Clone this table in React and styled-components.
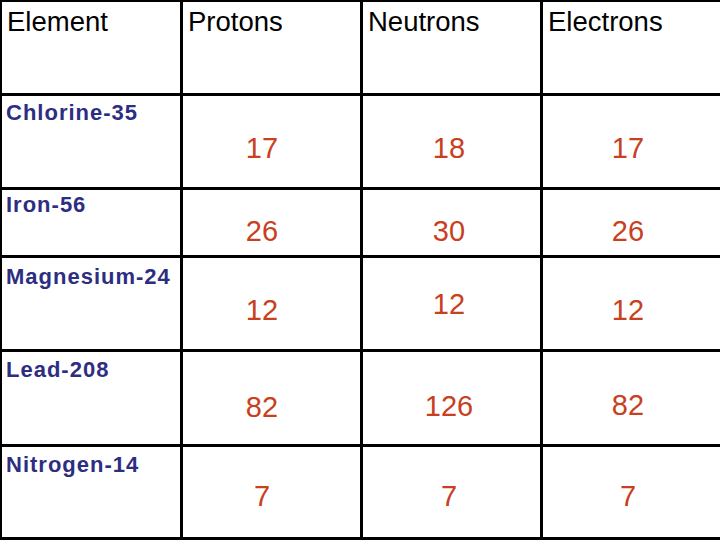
import { Fragment } from "react";
import styled, { createGlobalStyle } from "styled-components";

const GlobalStyle = createGlobalStyle`
  html, body {
    margin: 0;
    padding: 0;
    background: #fff;
    overflow: hidden;
  }
`;

// 표 데이터
const rows = [
  { name: "Chlorine-35", height: 91, nameTop: 4, values: [17, 18, 17], dy: [13, 13, 13] },
  { name: "Iron-56", height: 65, nameTop: 2, values: [26, 30, 26], dy: [18, 18, 18] },
  { name: "Magnesium-24", height: 91, nameTop: 6, values: [12, 12, 12], dy: [13, 2, 13] },
  { name: "Lead-208", height: 92, nameTop: 5, values: [82, 126, 82], dy: [18, 16, 14] },
  { name: "Nitrogen-14", height: 90, nameTop: 5, values: [7, 7, 7], dy: [8, 8, 8] },
];

const headers = ["Element", "Protons", "Neutrons", "Electrons"];
const shiftX = [19, 5, 7];

const Table = styled.div`
  width: 720px;
  height: 540px;
  box-sizing: border-box;
  display: grid;
  grid-template-columns: 178px 177px 177px 177px;
  grid-template-rows: 91px ${rows.map((r) => r.height + "px").join(" ")};
  gap: 3px;
  padding: 2px 0 3px 2px;
  background: #000;
`;

const HeadCell = styled.div`
  background: #fff;
  padding: 4px 0 0 5px;
  font-family: "Liberation Sans", Arial, sans-serif;
  font-size: 27.5px;
  color: #000;
`;

const NameCell = styled.div`
  background: #fff;
  padding: ${(p) => p.$top}px 0 0 4px;
  font-family: "Liberation Sans", Arial, sans-serif;
  font-size: 22px;
  font-weight: 700;
  letter-spacing: 1px;
  color: #2d2d82;
  white-space: nowrap;
`;

const NumCell = styled.div`
  background: #fff;
  display: flex;
  align-items: center;
  justify-content: center;
  padding-top: ${(p) => p.$dy}px;
  padding-right: ${(p) => p.$dx}px;
  font-family: "Liberation Sans", Arial, sans-serif;
  font-size: 29px;
  color: #c8401e;
`;

function App() {
  return (
    <>
      <GlobalStyle />
      <Table>
        {headers.map((h) => (
          <HeadCell key={h}>{h}</HeadCell>
        ))}
        {rows.map((row) => (
          <Fragment key={row.name}>
            <NameCell $top={row.nameTop}>{row.name}</NameCell>
            {row.values.map((v, i) => (
              <NumCell key={i} $dy={row.dy[i]} $dx={shiftX[i]}>
                {v}
              </NumCell>
            ))}
          </Fragment>
        ))}
      </Table>
    </>
  );
}

export default App;
